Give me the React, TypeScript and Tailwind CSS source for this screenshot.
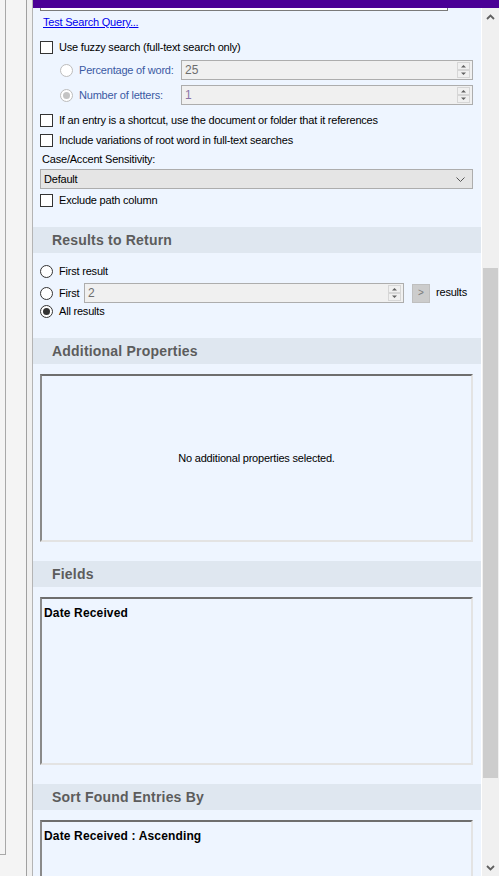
import React from "react";

function Checkbox() {
  return <span className="box-border block w-[13px] h-[13px] border border-[#333333] bg-white shrink-0" />;
}

function Radio({ checked = false, disabled = false }: { checked?: boolean; disabled?: boolean }) {
  return (
    <span
      className={`box-border flex items-center justify-center w-[13px] h-[13px] rounded-full border bg-white shrink-0 ${
        disabled ? "border-[#bcbcbc]" : "border-[#333333]"
      }`}
    >
      {checked && (
        <span className={`block w-[7px] h-[7px] rounded-full ${disabled ? "bg-[#c4c4c4]" : "bg-[#333333]"}`} />
      )}
    </span>
  );
}

function Spinner() {
  return (
    <svg width="13" height="16" viewBox="0 0 13 16" className="shrink-0 mr-[2px]">
      <rect x="0.5" y="0.5" width="12" height="7" fill="#f0f0f0" stroke="#d6d6d6" />
      <rect x="0.5" y="8.5" width="12" height="7" fill="#f0f0f0" stroke="#d6d6d6" />
      <polygon points="4,5.5 9,5.5 6.5,3" fill="#606060" />
      <polygon points="4,10.5 9,10.5 6.5,13" fill="#606060" />
    </svg>
  );
}

function NumInput({ value, className = "", valueColor = "text-[#6d6d6d]" }: { value: string; className?: string; valueColor?: string }) {
  return (
    <div className={`box-border h-[20px] flex items-center border border-[#adadad] bg-[#f0f0f0] ${className}`}>
      <span className={`flex-1 pl-[3px] text-[12px] ${valueColor}`}>{value}</span>
      <Spinner />
    </div>
  );
}

function Header({ title, mt }: { title: string; mt: string }) {
  return (
    <div className={`h-[26px] shrink-0 flex items-center bg-[#dfe7f0] pl-[19px] ${mt}`}>
      <span className="text-[14px] font-bold text-[#5c5c5c] tracking-[0.2px]">{title}</span>
    </div>
  );
}

function Box({ children, className = "" }: { children?: React.ReactNode; className?: string }) {
  return (
    <div
      className={`ml-[7px] mr-[8px] shrink-0 box-border border-2 border-t-[#6e6e6e] border-l-[#8a8a8a] border-r-[#e3e3e3] border-b-[#e3e3e3] bg-[#eef5ff] ${className}`}
    >
      {children}
    </div>
  );
}

function Scrollbar() {
  return (
    <div className="w-[17px] bg-[#f0f0f0] flex flex-col shrink-0">
      <div className="h-[17px] flex items-center justify-center shrink-0">
        <svg width="9" height="6" viewBox="0 0 9 6">
          <polyline points="1,5 4.5,1.5 8,5" fill="none" stroke="#606060" strokeWidth="1.8" />
        </svg>
      </div>
      <div className="flex-1 flex flex-col min-h-0">
        <div className="mt-[243px] h-[510px] mx-[1px] bg-[#cdcdcd] shrink-0" />
        <div className="flex-1" />
      </div>
      <div className="h-[17px] flex items-center justify-center shrink-0">
        <svg width="9" height="6" viewBox="0 0 9 6">
          <polyline points="1,1 4.5,4.5 8,1" fill="none" stroke="#606060" strokeWidth="1.8" />
        </svg>
      </div>
    </div>
  );
}

const label = "leading-[14px] tracking-[-0.2px] whitespace-nowrap";
const boldLabel = "text-[12px] leading-[14px] font-bold tracking-[0.15px] whitespace-nowrap block";

export default function App() {
  return (
    <div className="flex w-[499px] h-[876px] overflow-hidden bg-[#f0f0f0] font-['Liberation_Sans',Arial,sans-serif] text-[11px] text-black">
      {/* left strip */}
      <div className="w-[26px] h-full bg-[#f4f4f4] flex flex-col shrink-0">
        <div className="w-[6px] h-[855px] shrink-0 border-r border-b border-[#a8a8a8]" />
      </div>
      <div className="w-px h-full bg-[#a0a0a0] shrink-0" />
      <div className="w-[5px] h-full bg-[#f0f0f0] shrink-0" />
      <div className="w-px h-full bg-[#b4b4b4] shrink-0" />

      <div className="flex flex-col w-[466px] h-full shrink-0">
        <div className="h-[8px] bg-[#4b0096] shrink-0" />
        <div className="flex flex-1 min-h-0">
          {/* main panel */}
          <div className="w-[448px] bg-[#eef5ff] flex flex-col overflow-hidden shrink-0">
            <div className="pl-[7px] pr-[8px] flex flex-col shrink-0">
              <div className="h-[3px] w-[408px] bg-white border-x border-b border-[#7a7a7a]" />
              <div className="mt-[3px] h-[16px] flex items-center pl-[3px]">
                <span className={`${label} text-[#0000ee] underline`}>Test Search Query...</span>
              </div>

              <div className="mt-[9px] h-[16px] flex items-center gap-[6px]">
                <Checkbox />
                <span className={label}>Use fuzzy search (full-text search only)</span>
              </div>

              <div className="mt-[5px] h-[20px] flex items-center pl-[20px]">
                <Radio disabled />
                <span className={`${label} ml-[6px] w-[102px] text-[#3b5aa3]`}>Percentage of word:</span>
                <NumInput value="25" className="flex-1" />
              </div>

              <div className="mt-[5px] h-[20px] flex items-center pl-[20px]">
                <Radio disabled checked />
                <span className={`${label} ml-[6px] w-[102px] text-[#3b5aa3]`}>Number of letters:</span>
                <NumInput value="1" className="flex-1" valueColor="text-[#8a74a8]" />
              </div>

              <div className="mt-[7px] h-[16px] flex items-center gap-[6px]">
                <Checkbox />
                <span className={label}>If an entry is a shortcut, use the document or folder that it references</span>
              </div>

              <div className="mt-[4px] h-[16px] flex items-center gap-[6px]">
                <Checkbox />
                <span className={label}>Include variations of root word in full-text searches</span>
              </div>

              <div className="mt-[3px] h-[16px] flex items-center pl-[2px]">
                <span className={label}>Case/Accent Sensitivity:</span>
              </div>

              <div className="mt-[2px] box-border h-[20px] flex items-center border border-[#adadad] bg-[#e5e5e5] pl-[3px] pr-[7px]">
                <span className={`${label} flex-1`}>Default</span>
                <svg width="9" height="5" viewBox="0 0 9 5">
                  <polyline points="0.5,0.5 4.5,4.5 8.5,0.5" fill="none" stroke="#555555" strokeWidth="1" />
                </svg>
              </div>

              <div className="mt-[3px] h-[16px] flex items-center gap-[6px]">
                <Checkbox />
                <span className={label}>Exclude path column</span>
              </div>
            </div>

            <Header title="Results to Return" mt="mt-[19px]" />

            <div className="pl-[7px] pr-[8px] flex flex-col shrink-0">
              <div className="mt-[10px] h-[16px] flex items-center gap-[6px]">
                <Radio />
                <span className={label}>First result</span>
              </div>
              <div className="mt-[4px] h-[20px] flex items-center">
                <Radio />
                <span className={`${label} ml-[6px] w-[25px]`}>First</span>
                <NumInput value="2" className="w-[320px]" />
                <div className="ml-[8px] box-border w-[18px] h-[19px] bg-[#cccccc] border border-[#bfbfbf] flex items-center justify-center">
                  <span className="text-[10px] text-[#7a7a7a] leading-none">&gt;</span>
                </div>
                <span className={`${label} ml-[6px] -mt-[2px]`}>results</span>
              </div>
              <div className="h-[16px] flex items-center gap-[6px]">
                <Radio checked />
                <span className={label}>All results</span>
              </div>
            </div>

            <Header title="Additional Properties" mt="mt-[19px]" />
            <Box className="mt-[10px] h-[168px] flex items-center justify-center">
              <span className={label}>No additional properties selected.</span>
            </Box>

            <Header title="Fields" mt="mt-[19px]" />
            <Box className="mt-[10px] h-[168px] pt-[7px] pl-[2px]">
              <span className={boldLabel}>Date Received</span>
            </Box>

            <Header title="Sort Found Entries By" mt="mt-[19px]" />
            <Box className="mt-[10px] h-[100px] pt-[7px] pl-[2px]">
              <span className={boldLabel}>Date Received : Ascending</span>
            </Box>
          </div>
          <div className="w-px bg-white shrink-0" />
          <Scrollbar />
        </div>
      </div>
    </div>
  );
}
